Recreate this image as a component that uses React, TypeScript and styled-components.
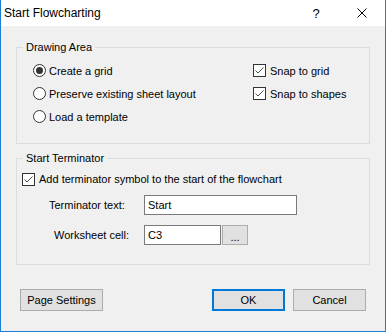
import styled, { createGlobalStyle } from 'styled-components'

const GlobalStyle = createGlobalStyle`
  html, body {
    margin: 0;
    padding: 0;
    background: #ffffff;
  }
  body {
    font-family: "Liberation Sans", Arial, sans-serif;
    font-size: 11px;
    color: #000000;
  }
`

const Window = styled.div`
  width: 386px;
  height: 332px;
  box-sizing: border-box;
  border: 1px solid #1c7fd6;
  border-top: none;
  background: #f0f0f0;
  display: flex;
  flex-direction: column;
`

const TitleBar = styled.div`
  height: 26px;
  background: #ffffff;
  display: flex;
  align-items: center;
  font-size: 12px;
`

const Title = styled.div`
  flex: 1;
  padding-left: 3px;
`

const CaptionButton = styled.div`
  width: 46px;
  height: 26px;
  display: flex;
  align-items: center;
  justify-content: center;
  font-size: 13px;
`

const Body = styled.div`
  flex: 1;
  display: flex;
  flex-direction: column;
  padding: 0 15px;
`

const Group = styled.fieldset<{ $top: number; $pad: string }>`
  margin: ${(p) => p.$top}px 0 0;
  padding: ${(p) => p.$pad};
  border: 1px solid #dcdcdc;
  min-width: 0;
`

const Legend = styled.legend<{ $indent: number }>`
  margin-left: ${(p) => p.$indent}px;
  padding: 0 3px;
  line-height: 15px;
`

const Columns = styled.div`
  display: grid;
  grid-template-columns: 220px 1fr;
`

const Column = styled.div`
  display: flex;
  flex-direction: column;
`

const OptionRow = styled.label<{ $h: number; $gap: number }>`
  height: ${(p) => p.$h}px;
  display: flex;
  align-items: center;
  gap: ${(p) => p.$gap}px;
  white-space: nowrap;
`

const Radio = styled.span<{ $on?: boolean }>`
  width: 13px;
  height: 13px;
  box-sizing: border-box;
  border: 1px solid #333333;
  border-radius: 50%;
  background: #ffffff;
  display: flex;
  align-items: center;
  justify-content: center;
  flex: none;

  &::after {
    content: '';
    width: 7px;
    height: 7px;
    border-radius: 50%;
    background: ${(p) => (p.$on ? '#333333' : 'transparent')};
  }
`

const Box = styled.span`
  width: 13px;
  height: 13px;
  box-sizing: border-box;
  border: 1px solid #333333;
  background: #ffffff;
  display: flex;
  flex: none;
`

const FieldRow = styled.div<{ $top: number }>`
  display: flex;
  align-items: center;
  margin-top: ${(p) => p.$top}px;
`

const FieldLabel = styled.span<{ $indent: number }>`
  width: 122px;
  box-sizing: border-box;
  padding-left: ${(p) => p.$indent}px;
`

const TextBox = styled.div<{ $w: number }>`
  width: ${(p) => p.$w}px;
  height: 20px;
  box-sizing: border-box;
  border: 1px solid #7a7a7a;
  background: #ffffff;
  padding-left: 3px;
  display: flex;
  align-items: center;
`

const Button = styled.div<{ $w: number; $primary?: boolean }>`
  width: ${(p) => p.$w}px;
  height: 22px;
  box-sizing: border-box;
  border: ${(p) => (p.$primary ? '2px solid #0078d7' : '1px solid #adadad')};
  background: #e1e1e1;
  display: flex;
  align-items: center;
  justify-content: center;
  flex: none;
`

const BrowseButton = styled(Button)`
  height: 20px;
  margin-left: 1px;
  padding-top: 3px;
`

const Footer = styled.div`
  display: flex;
  align-items: center;
  gap: 8px;
  margin-top: 24px;
  padding: 0 4px;
`

const Spacer = styled.div`
  flex: 1;
`

function Check() {
  return (
    <Box>
      <svg width="11" height="11" viewBox="0 0 11 11">
        <polyline points="1.5,5.5 4,8 9.5,2.5" fill="none" stroke="#4d4d4d" strokeWidth="1" />
      </svg>
    </Box>
  )
}

function App() {
  return (
    <>
      <GlobalStyle />
      <Window>
        <TitleBar>
          <Title>Start Flowcharting</Title>
          <CaptionButton>?</CaptionButton>
          <CaptionButton>
            <svg width="10" height="10" viewBox="0 0 10 10">
              <path d="M0.5 0.5 L9.5 9.5 M9.5 0.5 L0.5 9.5" stroke="#000" strokeWidth="1" />
            </svg>
          </CaptionButton>
        </TitleBar>
        <Body>
          <Group $top={14} $pad="4px 0 15px 16px">
            <Legend $indent={-10}>Drawing Area</Legend>
            <Columns>
              <Column>
                <OptionRow $h={23} $gap={3}>
                  <Radio $on />
                  Create a grid
                </OptionRow>
                <OptionRow $h={23} $gap={3}>
                  <Radio />
                  Preserve existing sheet layout
                </OptionRow>
                <OptionRow $h={23} $gap={3}>
                  <Radio />
                  Load a template
                </OptionRow>
              </Column>
              <Column>
                <OptionRow $h={23} $gap={4}>
                  <Check />
                  Snap to grid
                </OptionRow>
                <OptionRow $h={23} $gap={4}>
                  <Check />
                  Snap to shapes
                </OptionRow>
              </Column>
            </Columns>
          </Group>
          <Group $top={7} $pad="3px 0 19px 5px">
            <Legend $indent={1}>Start Terminator</Legend>
            <OptionRow $h={20} $gap={4}>
              <Check />
              Add terminator symbol to the start of the flowchart
            </OptionRow>
            <FieldRow $top={6}>
              <FieldLabel $indent={27}>Terminator text:</FieldLabel>
              <TextBox $w={153}>Start</TextBox>
            </FieldRow>
            <FieldRow $top={10}>
              <FieldLabel $indent={32}>Worksheet cell:</FieldLabel>
              <TextBox $w={77}>C3</TextBox>
              <BrowseButton $w={26}>...</BrowseButton>
            </FieldRow>
          </Group>
          <Footer>
            <Button $w={83}>Page Settings</Button>
            <Spacer />
            <Button $w={73} $primary>
              OK
            </Button>
            <Button $w={73}>Cancel</Button>
          </Footer>
        </Body>
      </Window>
    </>
  )
}

export default App
